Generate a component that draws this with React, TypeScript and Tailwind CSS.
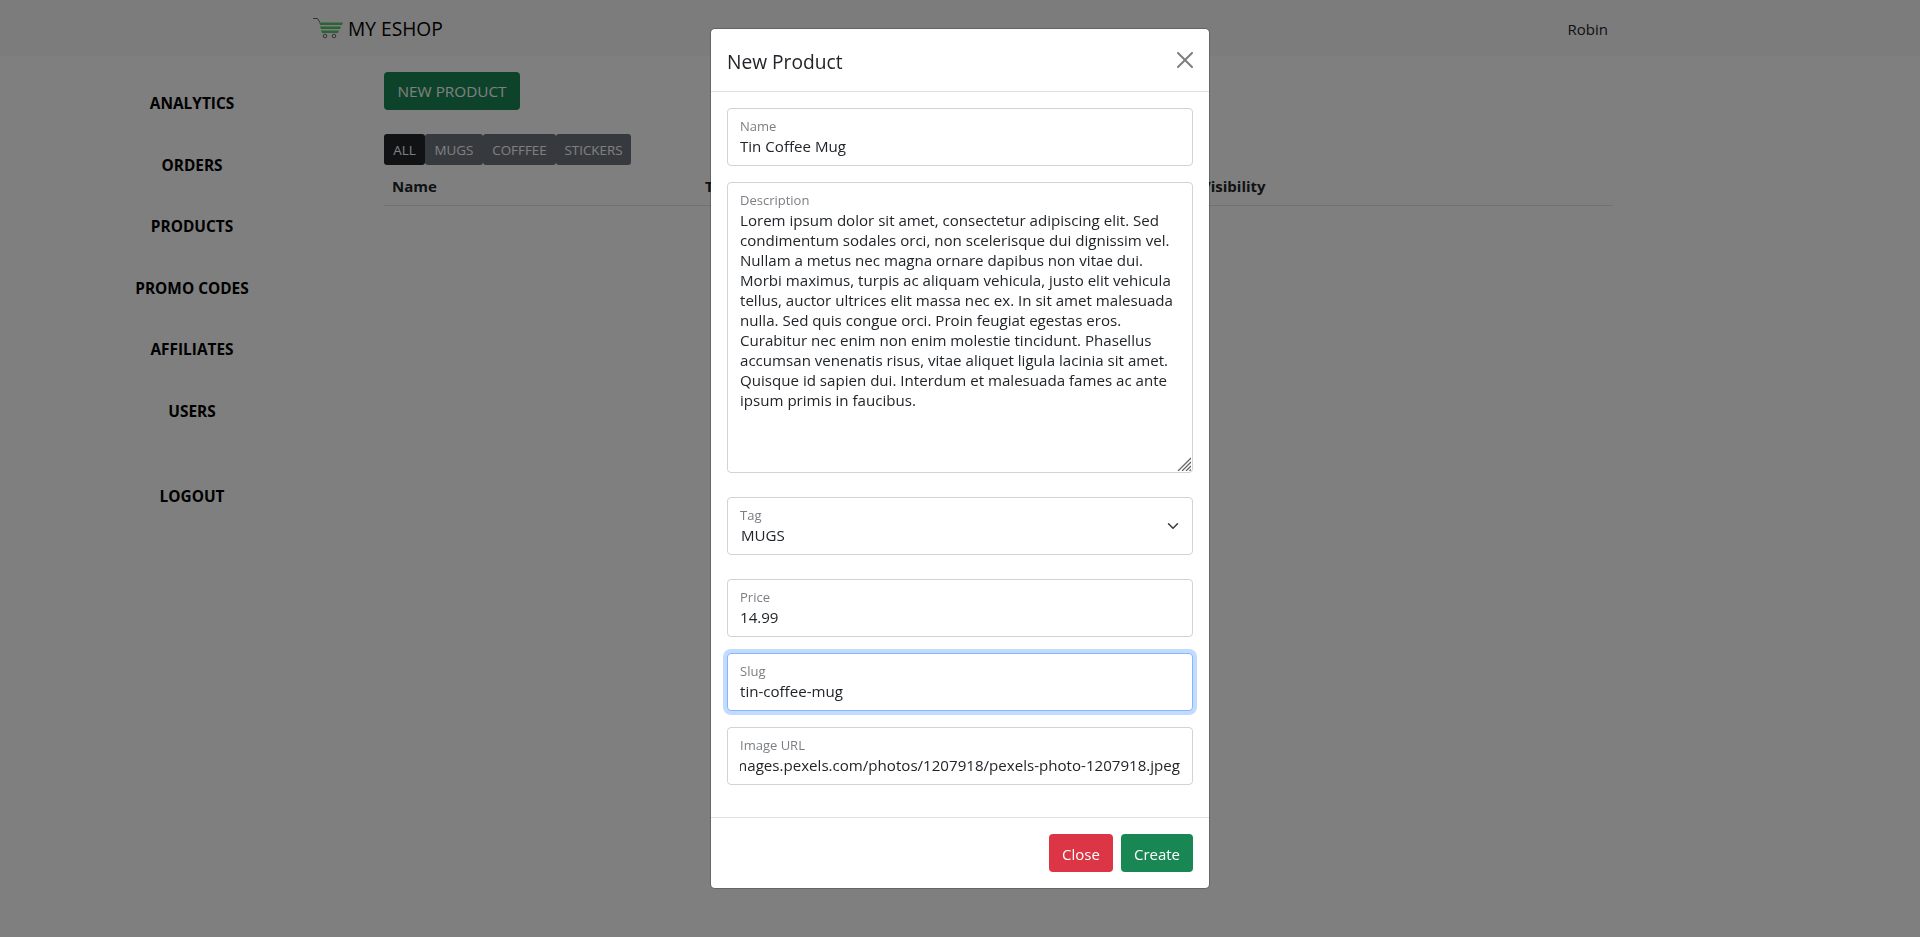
import { useEffect, useRef } from "react";

const font = "[font-family:'Open_Sans','Noto_Sans',sans-serif]";

const description =
  "Lorem ipsum dolor sit amet, consectetur adipiscing elit. Sed\ncondimentum sodales orci, non scelerisque dui dignissim vel.\nNullam a metus nec magna ornare dapibus non vitae dui.\nMorbi maximus, turpis ac aliquam vehicula, justo elit vehicula\ntellus, auctor ultrices elit massa nec ex. In sit amet malesuada\nnulla. Sed quis congue orci. Proin feugiat egestas eros.\nCurabitur nec enim non enim molestie tincidunt. Phasellus\naccumsan venenatis risus, vitae aliquet ligula lacinia sit amet.\nQuisque id sapien dui. Interdum et malesuada fames ac ante\nipsum primis in faucibus.";

function CartLogo() {
  return (
    <svg width="32" height="26" viewBox="0 0 32 26" fill="none" className="shrink-0">
      <path d="M1 2.500h4.500l2.500 4" stroke="#666" strokeWidth="1" />
      <path d="M7 6.500h24l-1 2.500H8z" fill="#55c866" />
      <path d="M8 10.500h21l-1 2.500H9z" fill="#55c866" />
      <path d="M9 14.500h18l-1 2.500H10z" fill="#55c866" />
      <circle cx="13" cy="20" r="1.800" stroke="#666" strokeWidth="1" />
      <circle cx="22" cy="20" r="1.800" stroke="#666" strokeWidth="1" />
    </svg>
  );
}

function Label({ children }: { children: string }) {
  return (
    <label className="absolute left-[13px] top-[9px] text-[13px] leading-[18px] text-[#7b7f83] pointer-events-none">
      {children}
    </label>
  );
}

const inputClass =
  "block w-full h-[58px] rounded-[4px] border border-[#ced4da] bg-white pr-[12px] pt-[25px] pb-[7px] text-[15.1px] leading-[20px] text-[#212529] outline-none";

function Field({
  label,
  value,
  className = "",
  focus = false,
}: {
  label: string;
  value: string;
  className?: string;
  focus?: boolean;
}) {
  return (
    <div className={"relative " + className}>
      <input
        readOnly
        value={value}
        className={
          inputClass +
          " pl-[12px]" +
          (focus ? " !border-[#86b7fe] shadow-[0_0_0_4px_rgba(13,110,253,0.25)]" : "")
        }
      />
      <Label>{label}</Label>
    </div>
  );
}

export default function App() {
  const urlRef = useRef<HTMLInputElement>(null);
  useEffect(() => {
    if (urlRef.current) urlRef.current.scrollLeft = urlRef.current.scrollWidth;
  }, []);

  return (
    <div className={"h-screen overflow-hidden bg-white text-[#212529] " + font}>
      <header className="h-[56px] bg-[#f8f9fa] flex items-center justify-between pl-[312px] pr-[312px] pt-[2px]">
        <div className="flex items-center gap-[4px]">
          <CartLogo />
          <span className="text-[19.2px] text-black">MY ESHOP</span>
        </div>
        <span className="text-[15px] text-[#212529]">Robin</span>
      </header>

      <div className="flex">
        <nav className="w-[384px] pt-[17px] flex flex-col items-center text-[15.4px] font-bold text-black">
          {["ANALYTICS", "ORDERS", "PRODUCTS", "PROMO CODES", "AFFILIATES", "USERS"].map((t) => (
            <a key={t} className="h-[61.5px] flex items-center">
              {t}
            </a>
          ))}
          <a className="h-[61.5px] mt-[24px] flex items-center">LOGOUT</a>
        </nav>

        <main className="w-[1229px] pt-[16px]">
          <button className="h-[38px] w-[136px] rounded-[4px] bg-[#198754] text-white text-[15.3px]">
            NEW PRODUCT
          </button>
          <div className="mt-[24px] flex h-[31px] text-[13.4px] text-white">
            <button className="w-[41px] rounded-[3px] bg-[#212529] pt-[1px]">ALL</button>
            <button className="w-[58px] rounded-[3px] bg-[#6c757d] pt-[1px]">MUGS</button>
            <button className="w-[73px] rounded-[3px] bg-[#6c757d] pt-[1px]">COFFFEE</button>
            <button className="w-[75px] rounded-[3px] bg-[#6c757d] pt-[1px]">STICKERS</button>
          </div>
          <table className="w-full table-fixed">
            <thead>
              <tr className="border-b border-[#dee2e6] text-left text-[15px] font-bold h-[40px]">
                <th className="w-[313px] px-[8px] pt-[2px] font-bold">Name</th>
                <th className="w-[496px] px-[8px] pt-[2px] font-bold">Tag</th>
                <th className="px-[8px] pt-[2px] font-bold">Visibility</th>
              </tr>
            </thead>
          </table>
        </main>
      </div>

      <div className="fixed inset-0 bg-black/50 flex justify-center pt-[28px]">
        <div className="w-[500px] h-[861px] bg-white bg-clip-padding rounded-[5px] border border-black/20 flex flex-col">
          <div className="h-[63px] shrink-0 border-b border-[#dee2e6] flex items-center justify-between px-[16px] pt-[2px]">
            <h5 className="text-[19.2px] mt-[2px] text-[#212529]">New Product</h5>
            <button className="opacity-50 mb-[2px]" aria-label="Close">
              <svg width="16" height="16" viewBox="0 0 16 16" fill="#000">
                <path d="M.293.293a1 1 0 0 1 1.414 0L8 6.586 14.293.293a1 1 0 1 1 1.414 1.414L9.414 8l6.293 6.293a1 1 0 0 1-1.414 1.414L8 9.414l-6.293 6.293a1 1 0 0 1-1.414-1.414L6.586 8 .293 1.707a1 1 0 0 1 0-1.414z" />
              </svg>
            </button>
          </div>

          <div className="flex-1 p-[16px]">
            <Field label="Name" value="Tin Coffee Mug" />
            <div className="relative mt-[16px]">
              <textarea
                readOnly
                value={description}
                className="block w-full h-[291px] rounded-[4px] border border-[#ced4da] bg-white px-[12px] pt-[27px] pb-[6px] text-[15.1px] leading-[20px] text-[#212529] outline-none whitespace-pre overflow-hidden resize-none"
              />
              <Label>Description</Label>
              <svg
                className="absolute right-[2px] bottom-[2px] pointer-events-none"
                width="14"
                height="14"
                viewBox="0 0 14 14"
                stroke="#666"
                strokeWidth="1.300"
              >
                <path d="M1 14 14 1M5 14l9-9M9 14l5-5M12.500 14l1.500-1.500" />
              </svg>
            </div>
            <div className="relative mt-[24px]">
              <select defaultValue="MUGS" className={inputClass + " pl-[13px] appearance-none"}>
                <option>MUGS</option>
                <option>COFFFEE</option>
                <option>STICKERS</option>
              </select>
              <Label>Tag</Label>
              <svg
                className="absolute right-[12px] top-[23px] pointer-events-none"
                width="16"
                height="12"
                viewBox="0 0 16 16"
                fill="none"
                stroke="#343a40"
                strokeWidth="2"
                strokeLinecap="round"
                strokeLinejoin="round"
              >
                <path d="m2 5 6 6 6-6" />
              </svg>
            </div>
            <Field className="mt-[24px]" label="Price" value="14.99" />
            <Field className="mt-[16px]" label="Slug" value="tin-coffee-mug" focus />
            <div className="relative mt-[16px]">
              <input
                ref={urlRef}
                readOnly
                value="https://images.pexels.com/photos/1207918/pexels-photo-1207918.jpeg"
                className={inputClass + " pl-[12px]"}
              />
              <Label>Image URL</Label>
            </div>
          </div>

          <div className="h-[71px] shrink-0 border-t border-[#dee2e6] flex items-center justify-end gap-[8px] pr-[16px]">
            <button className="w-[64px] h-[38px] rounded-[4px] bg-[#dc3545] text-white text-[15px] pt-[2px]">Close</button>
            <button className="w-[72px] h-[38px] rounded-[4px] bg-[#198754] text-white text-[15px] pt-[2px]">Create</button>
          </div>
        </div>
      </div>
    </div>
  );
}
